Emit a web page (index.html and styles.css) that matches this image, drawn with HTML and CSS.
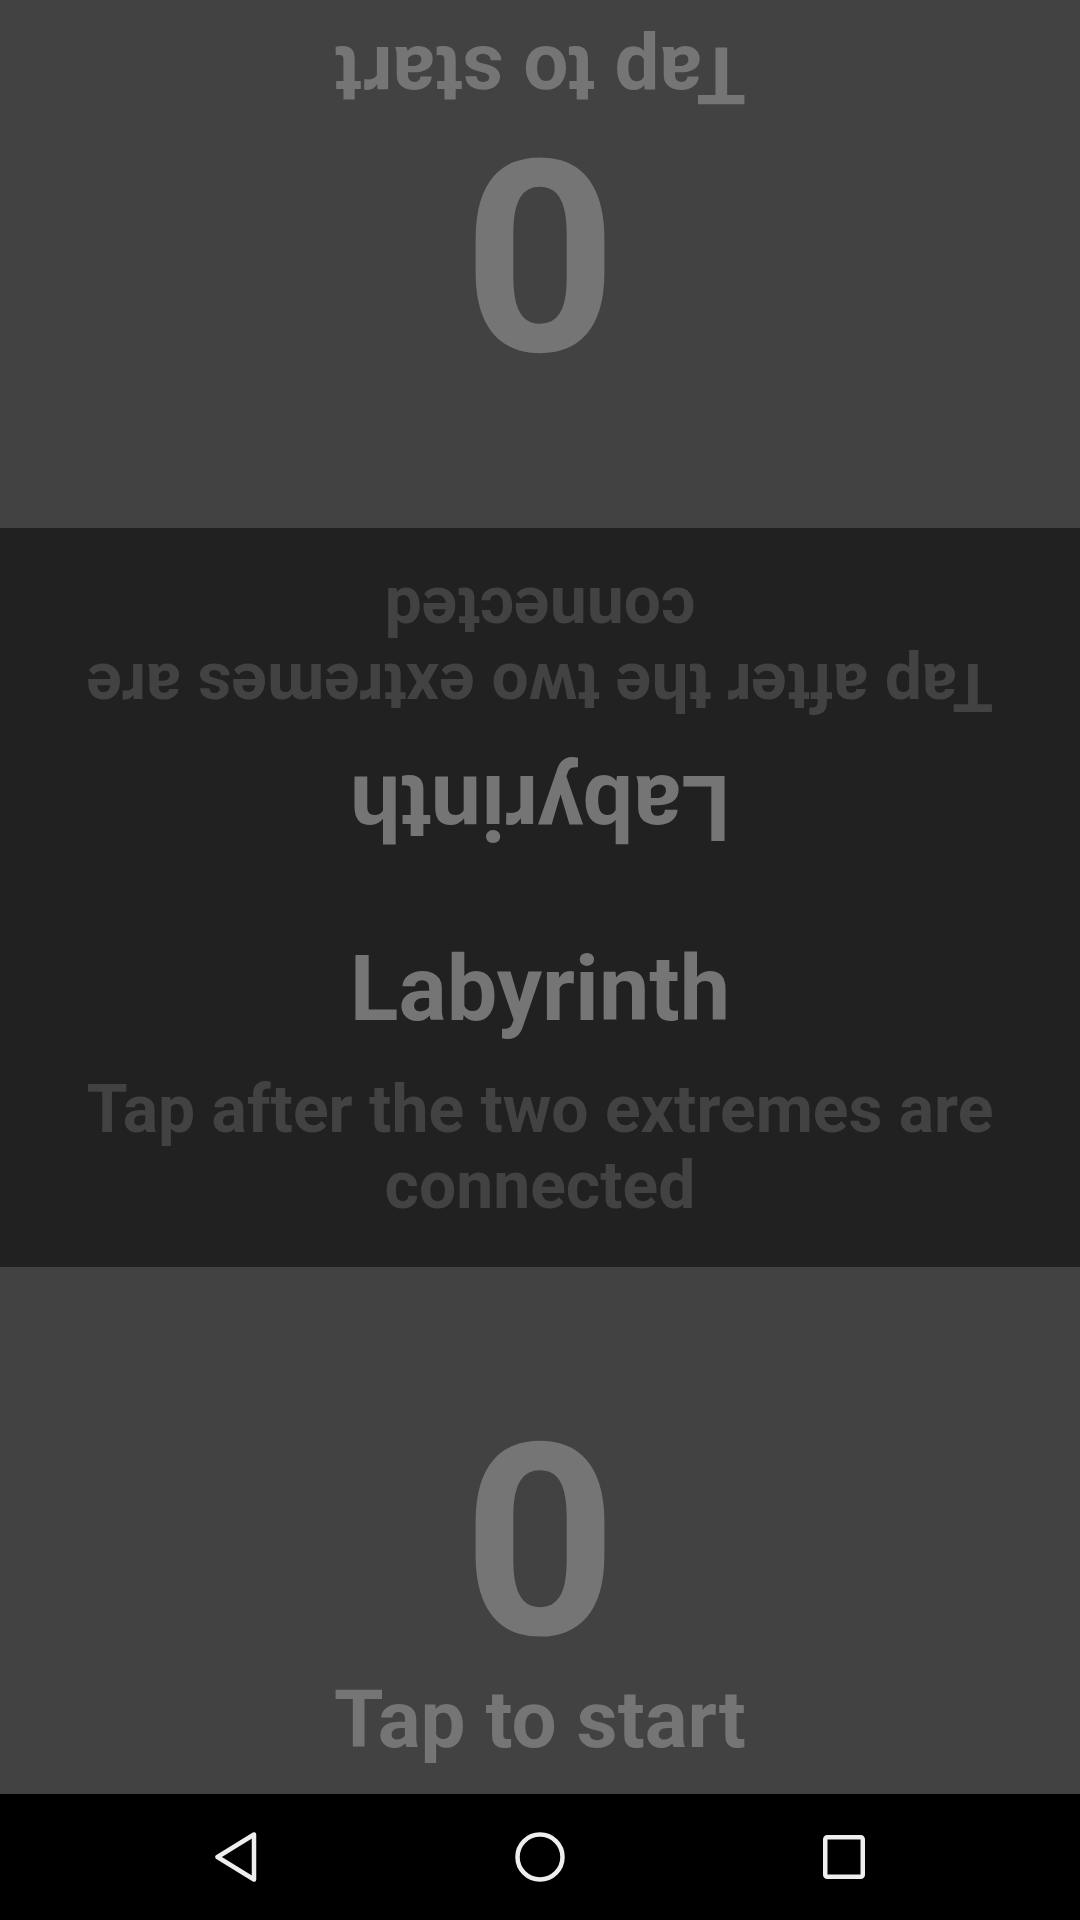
FILE: index.html
```html
<!DOCTYPE html>
<html lang="en">
<head>
<meta charset="utf-8">
<title>Labyrinth</title>
<link rel="stylesheet" href="styles.css">
</head>
<body>
<div class="screen">
  <section class="player player--top">
    <div class="score">0</div>
    <div class="hint">Tap to start</div>
  </section>
  <section class="middle">
    <div class="half half--flipped">
      <div class="title">Labyrinth</div>
      <div class="subtitle">Tap after the two extremes are connected</div>
    </div>
    <div class="half">
      <div class="title">Labyrinth</div>
      <div class="subtitle">Tap after the two extremes are connected</div>
    </div>
  </section>
  <section class="player">
    <div class="score">0</div>
    <div class="hint">Tap to start</div>
  </section>
  <nav class="navbar">
    <div class="nav-item">
      <svg class="nav-icon" viewBox="0 0 56 56"><path d="M46 5.5 L9.5 28 L46 50.5 Z" /></svg>
    </div>
    <div class="nav-item">
      <svg class="nav-icon" viewBox="0 0 56 56"><circle cx="28" cy="28" r="22.5" /></svg>
    </div>
    <div class="nav-item">
      <svg class="nav-icon" viewBox="0 0 56 56"><rect x="9.25" y="8.25" width="37.5" height="39.5" rx="2" /></svg>
    </div>
  </nav>
</div>
</body>
</html>
```

FILE: styles.css
```css
html, body {
  margin: 0;
  padding: 0;
  background: #000;
}

body {
  font-family: Roboto, "Noto Sans", "Liberation Sans", sans-serif;
  font-weight: 700;
}

.screen {
  width: 1080px;
  height: 1920px;
  display: flex;
  flex-direction: column;
  overflow: hidden;
}

.player {
  height: 527px;
  background: #424242;
  display: flex;
  flex-direction: column;
  justify-content: flex-end;
  align-items: center;
  padding-bottom: 34px;
  box-sizing: border-box;
  color: #757575;
}

.player--top {
  height: 528px;
  transform: rotate(180deg);
}

.score {
  font-size: 268px;
  line-height: 268px;
}

.hint {
  font-size: 80px;
  line-height: 80px;
  margin-top: 4px;
}

.middle {
  height: 739px;
  background: #212121;
  display: flex;
  flex-direction: column;
}

.half {
  flex: 1;
  display: flex;
  flex-direction: column;
  align-items: center;
  padding: 47px 16px 0;
  text-align: center;
}

.half--flipped {
  transform: rotate(180deg);
}

.title {
  font-size: 90px;
  line-height: 90px;
  color: #757575;
  margin-bottom: 37px;
}

.subtitle {
  font-size: 66px;
  line-height: 76px;
  color: #424242;
}

.navbar {
  height: 126px;
  background: #000;
  display: grid;
  grid-template-columns: 304px 304px 304px;
  justify-content: center;
  align-items: center;
}

.nav-item {
  display: flex;
  justify-content: center;
  align-items: center;
}

.nav-icon {
  width: 56px;
  height: 56px;
  fill: none;
  stroke: #eeeeee;
  stroke-width: 4.5;
  stroke-linejoin: round;
}
```
